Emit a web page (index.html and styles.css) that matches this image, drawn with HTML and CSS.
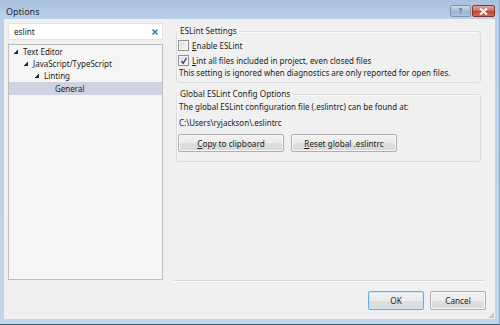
FILE: index.html
```html
<!DOCTYPE html>
<html lang="en">
<head>
  <meta charset="UTF-8" />
  <title>Options</title>
  <link rel="stylesheet" href="styles.css">
</head>
<body>

  <div class="window">
    <!-- Title bar -->
    <header class="titlebar">
      <div class="title">Options</div>
      <div class="caption-buttons">
        <button class="cap-btn help">?</button>
        <button class="cap-btn close">
          <svg width="9" height="7" viewBox="0 0 9 7"><path d="M1 0.5 L8 6.5 M8 0.5 L1 6.5" stroke="#fff" stroke-width="2"/></svg>
        </button>
      </div>
    </header>

    <div class="client">
      <div class="top-area">
        <!-- Left: search + tree -->
        <div class="nav">
          <div class="search">
            <span class="search-text">eslint</span>
            <svg class="search-clear" width="6" height="6" viewBox="0 0 6 6"><path d="M0.5 0.5 L5.5 5.5 M5.5 0.5 L0.5 5.5" stroke="#1f6fc0" stroke-width="1.4"/></svg>
          </div>
          <div class="tree">
            <div class="tree-row level-0"><span class="expander"></span>Text Editor</div>
            <div class="tree-row level-1"><span class="expander"></span>JavaScript/TypeScript</div>
            <div class="tree-row level-2"><span class="expander"></span>Linting</div>
            <div class="tree-row level-3 selected">General</div>
          </div>
        </div>

        <!-- Right: settings page -->
        <div class="page">
          <fieldset class="group">
            <legend>ESLint Settings</legend>
            <label class="check-row first">
              <span class="checkbox"></span>
              <span><u>E</u>nable ESLint</span>
            </label>
            <label class="check-row">
              <span class="checkbox checked">
                <svg width="8" height="8" viewBox="0 0 8 8"><path d="M1.5 4 L3.2 6.3 L6.5 1" stroke="#2b3f73" stroke-width="1.4" fill="none"/></svg>
              </span>
              <span><u>L</u>int all files included in project, even closed files</span>
            </label>
            <div class="note">This setting is ignored when diagnostics are only reported for open files.</div>
          </fieldset>

          <fieldset class="group second">
            <legend>Global ESLint Config Options</legend>
            <div class="text-line">The global ESLint configuration file (.eslintrc) can be found at:</div>
            <div class="text-line path">C:\Users\ryjackson\.eslintrc</div>
            <div class="button-row">
              <button class="btn wide"><u>C</u>opy to clipboard</button>
              <button class="btn wide"><u>R</u>eset global .eslintrc</button>
            </div>
          </fieldset>
        </div>
      </div>

      <div class="dialog-buttons">
        <button class="btn default">OK</button>
        <button class="btn">Cancel</button>
      </div>
    </div>

    <div class="grip"></div>
  </div>

</body>
</html>
```

FILE: styles.css
```css
*, *::before, *::after {
  box-sizing: border-box;
}

:root {
  --font-ui: 'Noto Sans', 'Open Sans', sans-serif;
  --color-client: #f0f0f0;
  --color-text: #222222;
  --color-frame: #bdd3ea;
}

html, body {
  margin: 0;
  padding: 0;
  width: 500px;
  height: 325px;
  overflow: hidden;
  font-family: var(--font-ui);
  font-size: 8px;
  color: var(--color-text);
  background: var(--color-frame);
}

.window {
  position: relative;
  width: 500px;
  height: 325px;
  display: flex;
  flex-direction: column;
  background: linear-gradient(to bottom, #a9c1dc 0px, #bcd1e9 19px, #c1d6ec 100%);
  border-right: 1px solid #8fa9c6;
  border-bottom: 1px solid #2e5d6c;
}

/* Title bar */

.titlebar {
  height: 19px;
  display: flex;
  justify-content: space-between;
  align-items: flex-start;
  padding: 0 4px 0 6px;
}

.title {
  font-size: 9px;
  line-height: 12px;
  margin-top: 6px;
  color: #1b2a3a;
}

.caption-buttons {
  display: flex;
  gap: 1px;
  margin-top: 5px;
}

.cap-btn {
  height: 12px;
  padding: 0;
  border-radius: 2px;
  display: flex;
  align-items: center;
  justify-content: center;
  font-family: var(--font-ui);
  font-size: 8px;
  font-weight: 700;
  line-height: 1;
}

.cap-btn.help {
  width: 21px;
  border: 1px solid #7d93ad;
  background: linear-gradient(to bottom, #cfdcec, #a8bdd6 50%, #9cb3cf 51%, #aec3dc);
  color: #5f7390;
}

.cap-btn.close {
  width: 23px;
  border: 1px solid #86352e;
  background: linear-gradient(to bottom, #e3a89e, #d0675a 50%, #c24232 51%, #cf6a55);
}

/* Client area */

.client {
  flex: 1;
  margin: 0 4px 5px 4px;
  background: var(--color-client);
  padding: 4px 10px 0 4px;
  display: flex;
  flex-direction: column;
}

.top-area {
  height: 258px;
  display: flex;
  gap: 11px;
}

.nav {
  width: 155px;
  display: flex;
  flex-direction: column;
  gap: 4px;
}

.search {
  height: 17px;
  background: #fff;
  border: 1px solid #e3e3e3;
  display: flex;
  align-items: center;
  justify-content: space-between;
  padding: 0 4px 0 5px;
  font-size: 8.2px;
}

.tree {
  height: 236px;
  background: #f5f5f5;
  border: 1px solid #bdbdbd;
  padding-top: 1px;
}

.tree-row {
  height: 12px;
  line-height: 12px;
  display: flex;
  align-items: center;
  white-space: nowrap;
}

.tree-row.selected {
  height: 13px;
  background: #cfd2e1;
}

.expander {
  width: 4px;
  height: 4px;
  margin-right: 5px;
  background: linear-gradient(to bottom right, transparent 50%, #2a2a2a 50%);
}

.level-0 { padding-left: 5px; }
.level-1 { padding-left: 15px; }
.level-2 { padding-left: 26px; }
.level-3 { padding-left: 46px; }

/* Settings page */

.page {
  flex: 1;
  padding: 1px 4px 0 2px;
  border-bottom: 1px solid #d6d6d6;
  box-shadow: 0 1px 0 #fff;
}

.group {
  margin: 0;
  padding: 0 2px 3px 1px;
  border: 1px solid #d8dcdf;
  border-radius: 3px;
  box-shadow: inset 1px 1px 0 #fbfbfb;
}

.group.second {
  margin-top: 4px;
  padding-bottom: 9px;
}

.group legend {
  padding: 0 2px;
  margin-left: 0;
  line-height: 14px;
  font-size: 8.2px;
}

.check-row {
  display: flex;
  align-items: center;
  gap: 3px;
  height: 13px;
  margin-top: 2px;
}

.check-row.first {
  margin-top: 1px;
}

.checkbox {
  width: 11px;
  height: 11px;
  border: 1px solid #939393;
  background: linear-gradient(to bottom right, #dcdcdc, #f7f7f7);
  box-shadow: inset 0 0 0 1px #f4f4f4;
  display: flex;
  align-items: center;
  justify-content: center;
}

.note, .text-line {
  line-height: 12px;
  padding-left: 1px;
}

.text-line.path {
  margin-top: 4px;
}

.button-row {
  display: flex;
  gap: 7px;
  margin-top: 5px;
}

.btn {
  height: 18px;
  padding: 0;
  font-family: var(--font-ui);
  font-size: 8.2px;
  color: var(--color-text);
  border: 1px solid #adadad;
  border-radius: 2px;
  background: linear-gradient(to bottom, #f2f2f2, #ebebeb 50%, #dfdfdf 51%, #d9d9d9);
  box-shadow: inset 0 0 0 1px #f7f7f7;
}

.btn.wide {
  width: 106px;
}

.dialog-buttons {
  display: flex;
  justify-content: flex-end;
  gap: 6px;
  margin-top: 10px;
  margin-right: -1px;
}

.dialog-buttons .btn {
  width: 56px;
  height: 19px;
}

.btn.default {
  border-color: #5fb0e4;
  box-shadow: inset 0 0 0 1px #c9e6f8;
}

.grip {
  position: absolute;
  right: 5px;
  bottom: 6px;
  width: 6px;
  height: 6px;
  background: radial-gradient(circle, #b4b4b4 0.6px, transparent 0.9px) 0 0 / 2px 2px;
  clip-path: polygon(100% 0, 100% 100%, 0 100%);
}
```
